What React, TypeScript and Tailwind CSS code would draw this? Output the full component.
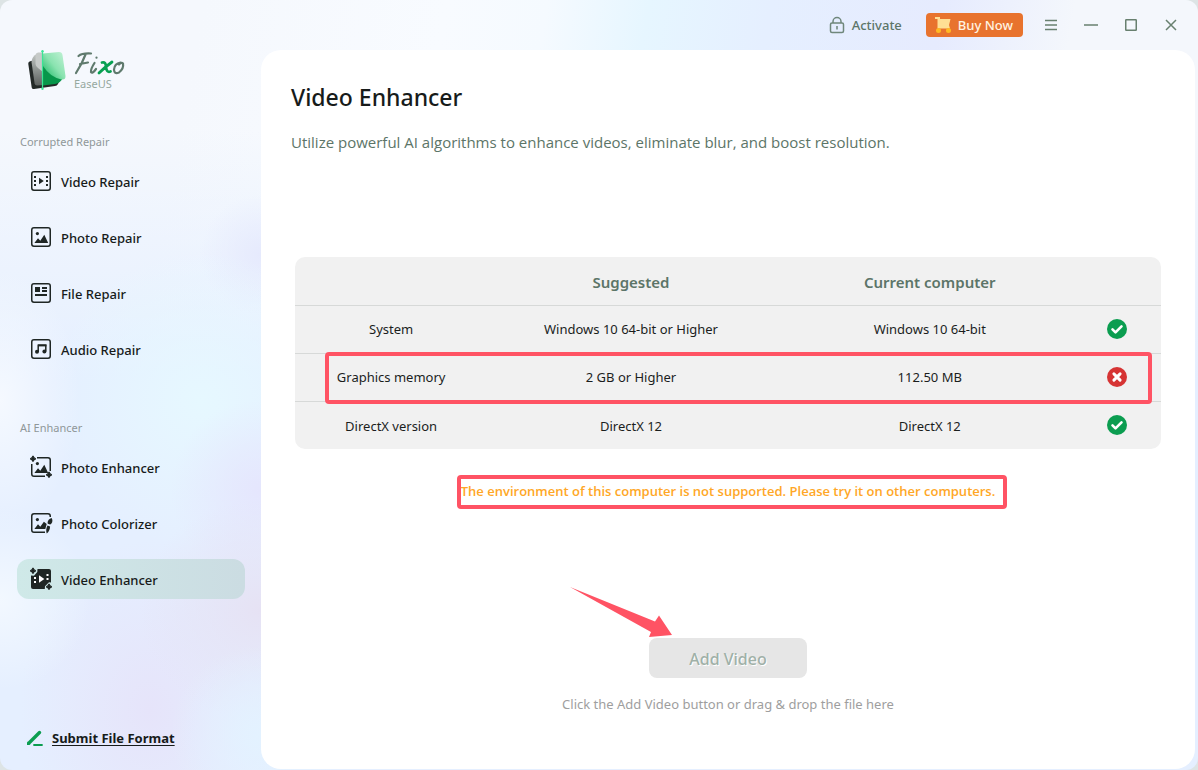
import type { ReactNode } from "react";

type NavItem = {
  label: string;
  icon: ReactNode;
  active?: boolean;
};

type Requirement = {
  name: string;
  suggested: string;
  current: string;
  ok: boolean;
};

const REQUIREMENTS: Requirement[] = [
  { name: "System", suggested: "Windows 10 64-bit or Higher", current: "Windows 10 64-bit", ok: true },
  { name: "Graphics memory", suggested: "2 GB or Higher", current: "112.50 MB", ok: false },
  { name: "DirectX version", suggested: "DirectX 12", current: "DirectX 12", ok: true },
];

// Soft pastel patches behind the sidebar and title bar
const BACKDROP = [
  "radial-gradient(circle at 260px 735px, #e3f2ff 0, #e3f2ff00 90px)",
  "radial-gradient(circle at 0 600px, #f2f8ff 0, #f2f8ff00 90px)",
  "radial-gradient(ellipse 120px 110px at 260px 610px, #e6e2f4 0, #e6e2f400 100%)",
  "radial-gradient(ellipse 130px 170px at 150px 710px, #e6e4fa 0, #e6e4fa00 100%)",
  "radial-gradient(circle at 260px 490px, #e5e6fd 0, #e5e6fd00 90px)",
  "radial-gradient(ellipse 80px 130px at 0 400px, #f5f9ff 0, #f5f9ff00 100%)",
  "radial-gradient(circle at 200px 400px, #e6f8ff 0, #e6f8ff00 150px)",
  "radial-gradient(circle at 260px 255px, #e6eafd 0, #e6eafd00 60px)",
  "linear-gradient(#e5efff00 130px, #e5efff 380px)",
  "linear-gradient(100deg, #f5f8fd 200px, #f8fbff 440px, #f5faff 540px, #e6f6ff 640px, #e5efff 760px, #e6ebfe 930px, #f4f7fc 1060px)",
].join(", ");

function Icon({ children }: { children: ReactNode }) {
  return (
    <svg width="24" height="24" viewBox="0 0 24 24" fill="none" aria-hidden="true" className="shrink-0">
      {children}
    </svg>
  );
}

const INK = "#1f2624";

const frame = <rect x="2.75" y="2.75" width="18.5" height="18.5" rx="2.2" stroke={INK} strokeWidth="1.5" />;

const mountains = (
  <>
    <circle cx="8.4" cy="8.6" r="1.6" fill={INK} />
    <path d="M5.4 18l3.6-4.8 2.3 2.5 4-5.9 3.9 8.2z" fill={INK} />
  </>
);

const star = "c.4 1.8 1 2.4 2.8 2.8c-1.8.4-2.4 1-2.8 2.8c-.4-1.8-1-2.4-2.8-2.8c1.8-.4 2.4-1 2.8-2.8z";

const REPAIR_ITEMS: NavItem[] = [
  {
    label: "Video Repair",
    icon: (
      <Icon>
        {frame}
        <path d="M10 8.8v6.4l4.8-3.2z" fill={INK} />
        <path d="M5 7h2v2H5zM5 11h2v2H5zM5 15h2v2H5zM17 7h2v2h-2zM17 11h2v2h-2zM17 15h2v2h-2z" fill={INK} />
      </Icon>
    ),
  },
  { label: "Photo Repair", icon: <Icon>{frame}{mountains}</Icon> },
  {
    label: "File Repair",
    icon: (
      <Icon>
        {frame}
        <path d="M6 6h5v5H6zM13 6h5v2h-5zM13 9h5v2h-5zM6 13h12v2H6z" fill={INK} />
      </Icon>
    ),
  },
  {
    label: "Audio Repair",
    icon: (
      <Icon>
        {frame}
        <path d="M9.2 15V8.2h7.6v6" stroke={INK} strokeWidth="1.5" />
        <path d="M9 7.4h8.4v2H9z" fill={INK} />
        <circle cx="8" cy="14.8" r="2" fill={INK} />
        <circle cx="15.4" cy="14.4" r="2" fill={INK} />
      </Icon>
    ),
  },
];

const ENHANCER_ITEMS: NavItem[] = [
  {
    label: "Photo Enhancer",
    icon: (
      <Icon>
        <path
          d="M8 2.75h11a2.25 2.25 0 0 1 2.25 2.25v11M2.75 9v10A2.25 2.25 0 0 0 5 21.25h11"
          stroke={INK}
          strokeWidth="1.5"
        />
        {mountains}
        <path d={`M4 1${star}`} fill={INK} stroke={INK} strokeWidth="1.2" />
        <path d={`M20 17${star}`} fill={INK} stroke={INK} strokeWidth="1.2" />
      </Icon>
    ),
  },
  {
    label: "Photo Colorizer",
    icon: (
      <Icon>
        <path
          d="M21.25 6V5A2.25 2.25 0 0 0 19 2.75H5A2.25 2.25 0 0 0 2.75 5v14A2.25 2.25 0 0 0 5 21.25h11"
          stroke={INK}
          strokeWidth="1.5"
        />
        <circle cx="8.4" cy="8.6" r="1.6" fill={INK} />
        <path d="M5.4 18l3.6-4.8 2.3 2.5 3.6-5 2.8 2.4-1.4 4.9z" fill={INK} />
        <path d="M22.6 7c1.6 2.6.6 5.400-1.500 6.600l-2.300-.8c-.8-2.200.8-5 3.800-5.800z" fill={INK} />
        <path d="M18.500 14.400l2.600 1c-.2 3-1.200 5.400-3.400 7.200-.8-2.800-.6-5.600.8-8.200z" fill={INK} />
      </Icon>
    ),
  },
  {
    label: "Video Enhancer",
    active: true,
    icon: (
      <Icon>
        <path d="M8.5 2H20a2 2 0 0 1 2 2v11.500l-2-.2-4 4-.2 2.700H4a2 2 0 0 1-2-2V8.500l3 .2 3.300-3.700z" fill={INK} />
        <path d="M10 8.300v7.400l5.400-3.700z" fill="#fff" />
        <path d="M5 10h2v2H5zM5 14h2v2H5zM17.500 7h2v2h-2zM17.500 11h2v2h-2z" fill="#fff" />
        <path d={`M4 1${star}`} fill={INK} stroke={INK} strokeWidth="1.2" />
        <path d={`M20 17${star}`} fill={INK} stroke={INK} strokeWidth="1.2" />
      </Icon>
    ),
  },
];

function Logo() {
  return (
    <div className="flex items-center gap-2 pl-7">
      <svg width="38" height="40" viewBox="0 0 38 40" aria-hidden="true">
        <defs>
          <linearGradient id="silver" x1="0" y1="0" x2="0" y2="1">
            <stop offset="0" stopColor="#c3c8c5" />
            <stop offset=".6" stopColor="#858b88" />
            <stop offset="1" stopColor="#5c605e" />
          </linearGradient>
          <linearGradient id="mint" x1="1" y1="0" x2="0" y2="1">
            <stop offset="0" stopColor="#c4f2d7" />
            <stop offset=".5" stopColor="#8ae3b0" />
            <stop offset="1" stopColor="#0eb35d" />
          </linearGradient>
        </defs>
        <path d="M3 11l24-4 7 18-4 9q-1 2-3 2L6 39q-2 .2-2.300-1.500L.3 14q-.3-2.500 2.700-3z" fill="#232927" />
        <path d="M9 4l6-1v32l-6 .5q-2 0-2.400-2L3.500 12Q4 6 9 4z" fill="url(#silver)" />
        <path d="M10 2.500h5V22l-5-4q-2.500-2-2.500-4V5q0-2 2.500-2.500z" fill="#c6cac8" />
        <path d="M15 4h14q3 0 3.500 3L35 27q-2 6-8 7l-12 1.500z" fill="#07964a" />
        <path d="M15 3.500L31 2q3 0 3.500 3L37.500 26q.3 4-4 3.500Q22 27 15 16z" fill="url(#mint)" />
        <path d="M14.500 1v38" stroke="#3be596" strokeWidth="1.200" />
        <circle cx="14.500" cy="1.200" r="1.200" fill="#3be596" />
        <circle cx="14.500" cy="38.800" r="1.200" fill="#3be596" />
      </svg>
      <div className="flex flex-col">
        {/* Hand-lettered word mark */}
        <svg width="52" height="28" viewBox="0 0 52 28" fill="none" strokeLinecap="round" role="img" aria-label="Fixo">
          <g stroke="#5f7a6d" strokeWidth="2.200">
            <path d="M4.500 6Q8 3 17 3.500M11.500 4.500Q8 14 2 23M6 14l8-1.500" />
            <path d="M20.500 13q-4 6-3.500 9 1.500 2 5-3M22.500 7.500v.2" />
            <path d="M46.500 12.500q-6 1-6.500 7 0 5 5 3 5-4 4-9-1.500-1.500-4 1" />
          </g>
          <path d="M28 12.500q4-1 4 4.500 .5 6 4.500 4.500M38 12q-7 5-13 11" stroke="#08a052" strokeWidth="2.800" />
        </svg>
        <span className="text-[11px] leading-3 text-[#96a89f]">EaseUS</span>
      </div>
    </div>
  );
}

function NavGroup({ title, items }: { title: string; items: NavItem[] }) {
  return (
    <section>
      <h2 className="px-5 text-[11px] leading-4 text-[#8f9799]">{title}</h2>
      <ul className="mt-[11px] flex flex-col gap-4 pr-4 pl-[17px]">
        {items.map((item) => (
          <li key={item.label}>
            <button
              type="button"
              aria-current={item.active ? "page" : undefined}
              className={`flex h-10 w-full items-center gap-2 rounded-xl px-3 text-left text-[13px] font-medium text-[#171b1a] ${
                item.active ? "bg-linear-to-r from-[#cfe9e8] to-[#cbdce2]" : ""
              }`}
            >
              {item.icon}
              <span className="pt-1">{item.label}</span>
            </button>
          </li>
        ))}
      </ul>
    </section>
  );
}

function Sidebar() {
  return (
    <aside className="flex w-[261px] shrink-0 flex-col pt-[50px]">
      <Logo />
      <nav className="mt-11 flex flex-col gap-[51px]">
        <NavGroup title="Corrupted Repair" items={REPAIR_ITEMS} />
        <NavGroup title="AI Enhancer" items={ENHANCER_ITEMS} />
      </nav>
      <a
        href="#submit"
        className="mt-auto mb-[22px] flex items-center gap-2 pl-[26px] text-[13px] font-bold text-[#171b1a]"
      >
        <svg width="18" height="18" viewBox="0 0 18 18" aria-hidden="true">
          <path d="M3.500 13.500L13.500 3.500" stroke="#0b9d50" strokeWidth="3.400" strokeLinecap="round" />
          <path d="M1 12.500V16h3.500z" fill="#0b9d50" />
          <path d="M8 16h8" stroke="#0b9d50" strokeWidth="1.800" strokeLinecap="round" />
        </svg>
        <span className="underline underline-offset-2">Submit File Format</span>
      </a>
    </aside>
  );
}

function TitleBar() {
  return (
    <header className="flex h-[50px] shrink-0 items-center justify-end pr-[19px] text-[13px] text-[#5c7568]">
      <button type="button" className="flex items-center gap-1.5 font-medium">
        <svg width="18" height="18" viewBox="0 0 18 18" fill="none" stroke="#6f877b" strokeWidth="1.500" aria-hidden="true">
          <rect x="2.500" y="7" width="13" height="9.500" rx="1.500" />
          <path d="M5 7V5.500a4 4 0 0 1 8 0V7M9 10v3.500" />
        </svg>
        <span className="pt-0.5">Activate</span>
      </button>
      <button
        type="button"
        className="ml-6 flex h-6 items-center gap-1.5 rounded bg-[#e8732e] pr-2.5 pl-2 font-medium text-[#fff3e0]"
      >
        <svg width="18" height="18" viewBox="0 0 18 18" aria-hidden="true">
          <path d="M1 1h5v2h10.500l-1.500 6 1 3.500H3.500V3H1z" fill="#ffdf94" />
          <circle cx="4.500" cy="14.500" r="2.500" fill="#ffba24" />
          <circle cx="14.500" cy="14.500" r="2.500" fill="#ffba24" />
        </svg>
        <span className="pt-0.5">Buy Now</span>
      </button>
      <div className="ml-5 flex gap-6">
        <button type="button" aria-label="Menu">
          <svg width="16" height="16" viewBox="0 0 16 16" stroke="#68806f" strokeWidth="1.500">
            <path d="M2 3.500h12M2 8h12M2 12.500h12" />
          </svg>
        </button>
        <button type="button" aria-label="Minimize">
          <svg width="16" height="16" viewBox="0 0 16 16" stroke="#68806f" strokeWidth="1.500">
            <path d="M1 8h14" />
          </svg>
        </button>
        <button type="button" aria-label="Maximize">
          <svg width="16" height="16" viewBox="0 0 16 16" fill="none" stroke="#68806f" strokeWidth="1.500">
            <rect x="2.750" y="2.750" width="10.500" height="10.500" rx=".5" />
          </svg>
        </button>
        <button type="button" aria-label="Close">
          <svg width="16" height="16" viewBox="0 0 16 16" stroke="#68806f" strokeWidth="1.500">
            <path d="M3 3l10 10M13 3L3 13" />
          </svg>
        </button>
      </div>
    </header>
  );
}

function StatusIcon({ ok }: { ok: boolean }) {
  return (
    <svg
      width="20"
      height="20"
      viewBox="0 0 20 20"
      fill="none"
      stroke="#fff"
      role="img"
      aria-label={ok ? "Supported" : "Not supported"}
      className="mx-auto"
    >
      <circle cx="10" cy="10" r="10" fill={ok ? "#0b9d50" : "#d63434"} stroke="none" />
      {ok ? (
        <path d="M5.500 10.300l3 3 6-6" strokeWidth="2.600" strokeLinecap="round" strokeLinejoin="round" />
      ) : (
        <path d="M6.900 6.900l6.200 6.200M13.100 6.900l-6.200 6.200" strokeWidth="3" strokeLinecap="round" />
      )}
    </svg>
  );
}

function RequirementsTable() {
  return (
    <div className="relative">
      <table className="w-full table-fixed overflow-hidden rounded-[10px] bg-[#f1f1f1] text-center text-[13px] text-[#1b1e1d]">
        <colgroup>
          <col className="w-[22.2%]" />
          <col className="w-[33.2%]" />
          <col className="w-[35.8%]" />
          <col />
        </colgroup>
        <thead>
          <tr className="h-12 text-[15px] text-[#5c7568]">
            <td />
            <th scope="col" className="pt-0.5 font-semibold">Suggested</th>
            <th scope="col" className="pt-0.5 font-semibold">Current computer</th>
            <td />
          </tr>
        </thead>
        <tbody>
          {REQUIREMENTS.map((row) => (
            <tr key={row.name} className="h-12 border-t border-[#d7d9d8]">
              <th scope="row" className="pt-0.5 font-normal">{row.name}</th>
              <td className="pt-0.5">{row.suggested}</td>
              <td className="pt-0.5">{row.current}</td>
              <td className="pr-3">
                <StatusIcon ok={row.ok} />
              </td>
            </tr>
          ))}
        </tbody>
      </table>
      {/* Marks the failing row */}
      <div className="pointer-events-none absolute top-[95px] right-[9px] left-[30px] h-[52px] rounded border-4 border-[#ff5364]" />
    </div>
  );
}

export default function App() {
  return (
    <div className="bg-[#dde4e5] font-['Noto_Sans','Open_Sans',sans-serif]">
      <div className="flex min-h-screen rounded-xl bg-[#e5efff]" style={{ backgroundImage: BACKDROP }}>
        <Sidebar />
        <div className="flex min-w-0 flex-1 flex-col">
          <TitleBar />
          <main className="mr-[3px] mb-px flex flex-1 flex-col rounded-[20px] bg-white pt-[31px]">
            <div className="px-[30px]">
              <h1 className="text-[23px] leading-8 font-medium text-[#171b1a]">Video Enhancer</h1>
              <p className="mt-[17px] font-['Open_Sans',sans-serif] text-[15px] leading-6 text-[#5c7568]">
                Utilize powerful AI algorithms to enhance videos, eliminate blur, and boost resolution.
              </p>
            </div>
            <div className="mt-[103px] px-[34px]">
              <RequirementsTable />
            </div>
            <div className="mt-8 flex justify-center">
              <p className="relative font-['Open_Sans',sans-serif] text-[13px] leading-5 font-semibold text-[#ffa726]">
                The environment of this computer is not supported. Please try it on other computers.
                <span className="pointer-events-none absolute -top-1.5 -right-3 -bottom-2 -left-1 rounded border-4 border-[#ff5364]" />
              </p>
            </div>
            <div className="mt-auto mb-[55px] flex flex-col items-center gap-4">
              <div className="relative">
                <button
                  type="button"
                  disabled
                  className="h-10 w-[158px] rounded-lg bg-[#e6e6e6] pt-0.5 text-[16px] font-medium text-[#9fb0a7] [text-shadow:1px_1px_0_#fff]"
                >
                  Add Video
                </button>
                <svg
                  width="104"
                  height="52"
                  viewBox="0 0 104 52"
                  aria-hidden="true"
                  className="pointer-events-none absolute right-[133px] bottom-full"
                >
                  <path d="M0 1L85 35.500l4-6L102 49l-23 2 2-5z" fill="#ff5364" />
                </svg>
              </div>
              <p className="text-[13px] leading-5 text-[#9e9e9e]">
                Click the Add Video button or drag &amp; drop the file here
              </p>
            </div>
          </main>
        </div>
      </div>
    </div>
  );
}
